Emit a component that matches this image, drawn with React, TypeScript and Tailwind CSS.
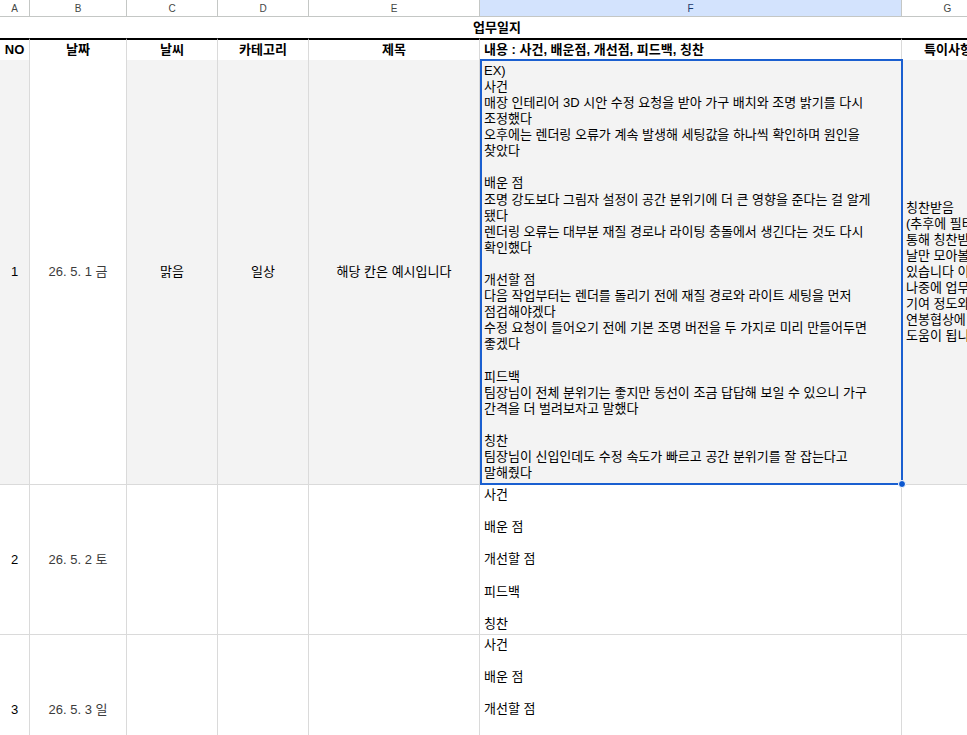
import React from 'react';

const COLS = 'grid grid-cols-[30px_97px_91px_91px_171px_422px_92px]';
const LETTERS = ['A', 'B', 'C', 'D', 'E', 'F', 'G'];

const EXAMPLE = [
  'EX)',
  '사건',
  '매장 인테리어 3D 시안 수정 요청을 받아 가구 배치와 조명 밝기를 다시',
  '조정했다',
  '오후에는 렌더링 오류가 계속 발생해 세팅값을 하나씩 확인하며 원인을',
  '찾았다',
  '',
  '배운 점',
  '조명 강도보다 그림자 설정이 공간 분위기에 더 큰 영향을 준다는 걸 알게',
  '됐다',
  '렌더링 오류는 대부분 재질 경로나 라이팅 충돌에서 생긴다는 것도 다시',
  '확인했다',
  '',
  '개선할 점',
  '다음 작업부터는 렌더를 돌리기 전에 재질 경로와 라이트 세팅을 먼저',
  '점검해야겠다',
  '수정 요청이 들어오기 전에 기본 조명 버전을 두 가지로 미리 만들어두면',
  '좋겠다',
  '',
  '피드백',
  '팀장님이 전체 분위기는 좋지만 동선이 조금 답답해 보일 수 있으니 가구',
  '간격을 더 벌려보자고 말했다',
  '',
  '칭찬',
  '팀장님이 신입인데도 수정 속도가 빠르고 공간 분위기를 잘 잡는다고',
  '말해줬다',
];

// the G column is wider than the window, so these lines run off the right edge
const NOTE = [
  '칭찬받음',
  '(추후에 필터를',
  '통해 칭찬받은',
  '날만 모아볼 수',
  '있습니다 이를',
  '나중에 업무',
  '기여 정도와',
  '연봉협상에',
  '도움이 됩니다)',
];

const TEMPLATE = ['사건', '', '배운 점', '', '개선할 점', '', '피드백', '', '칭찬'];

const ROWS = [
  { no: '2', date: '26. 5. 2 토' },
  { no: '3', date: '26. 5. 3 일' },
];

function Lines({ lines }: { lines: string[] }) {
  return (
    <div>
      {lines.map((l, i) => (
        <div key={i} className="leading-[16.1px] whitespace-pre">
          {l || '\u00a0'}
        </div>
      ))}
    </div>
  );
}

export default function App() {
  const cell = 'flex items-center border-r border-b border-[#dadada]';

  return (
    <div className="w-[967px] h-[735px] overflow-hidden bg-white text-[13px] text-black font-['Liberation_Sans','Noto_Sans_CJK_KR',sans-serif]">
      {/* column letters */}
      <div className={`${COLS} h-[17px]`}>
        {LETTERS.map((l) => (
          <div
            key={l}
            className={`flex items-center justify-center border-r border-b border-[#c4c7c5] text-[10px] ${
              l === 'F' ? 'bg-[#d3e3fd] text-[#1b3a6b]' : 'bg-white text-[#444746]'
            }`}
          >
            {l}
          </div>
        ))}
      </div>

      {/* title */}
      <div className={`${COLS} h-[21px]`}>
        <div className="col-span-7 flex items-center justify-center font-bold">업무일지</div>
      </div>

      {/* header */}
      <div className={`${COLS} h-[22px] font-bold`}>
        {['NO', '날짜', '날씨', '카테고리', '제목'].map((h) => (
          <div
            key={h}
            className="flex items-center justify-center border-y-2 border-y-black border-r border-r-[#dadada]"
          >
            {h}
          </div>
        ))}
        <div className="flex items-center px-[4px] border-y-2 border-y-black border-r border-r-[#dadada]">
          내용 : 사건, 배운점, 개선점, 피드백, 칭찬
        </div>
        <div className="flex items-center justify-center border-y-2 border-y-black whitespace-nowrap">
          특이사항
        </div>
      </div>

      {/* example row */}
      <div className={`${COLS} h-[425px]`}>
        <div className={`${cell} justify-center bg-[#f3f3f3]`}>1</div>
        <div className={`${cell} justify-center bg-white text-[#3c3c3c]`}>26. 5. 1 금</div>
        <div className={`${cell} justify-center bg-[#f3f3f3]`}>맑음</div>
        <div className={`${cell} justify-center bg-[#f3f3f3]`}>일상</div>
        <div className={`${cell} justify-center bg-[#f3f3f3]`}>해당 칸은 예시입니다</div>
        <div className={`${cell} relative px-[4px] bg-[#f3f3f3]`}>
          <Lines lines={EXAMPLE} />
          <div className="absolute left-0 -top-[1px] -right-[2px] -bottom-[1px] z-10 border-2 border-[#1a5fd0] pointer-events-none" />
          <div className="absolute -right-[5px] -bottom-[4px] z-20 w-[8px] h-[8px] rounded-full bg-[#0b57d0] border border-white" />
        </div>
        <div className={`${cell} px-[4px] bg-[#f3f3f3] overflow-hidden`}>
          <Lines lines={NOTE} />
        </div>
      </div>

      {/* empty days */}
      {ROWS.map((r) => (
        <div key={r.no} className={`${COLS} h-[150px]`}>
          <div className={`${cell} justify-center`}>{r.no}</div>
          <div className={`${cell} justify-center text-[#3c3c3c]`}>{r.date}</div>
          <div className={cell} />
          <div className={cell} />
          <div className={cell} />
          <div className={`${cell} px-[4px]`}>
            <Lines lines={TEMPLATE} />
          </div>
          <div className={cell} />
        </div>
      ))}
    </div>
  );
}
